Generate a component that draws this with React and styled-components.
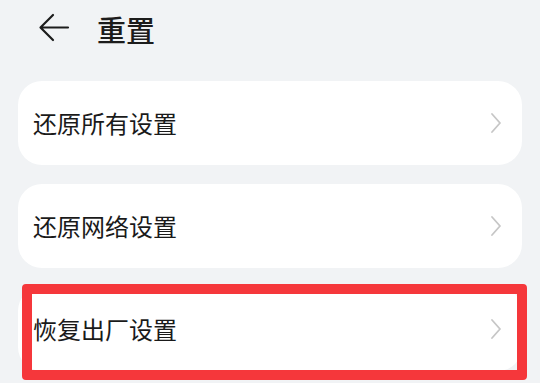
import styled, { createGlobalStyle } from 'styled-components';

const GlobalStyle = createGlobalStyle`
  body {
    margin: 0;
    background: #f1f3f5;
    font-family: "Noto Sans CJK SC", "Noto Sans", sans-serif;
  }
`;

const Page = styled.div`
  width: 540px;
  height: 383px;
  overflow: hidden;
  background: #f1f3f5;
`;

const Header = styled.div`
  height: 56px;
  display: flex;
  align-items: center;
  padding-left: 38px;
`;

const Back = styled.svg`
  width: 32px;
  height: 30px;
  margin-right: 27px;
`;

const Title = styled.div`
  font-size: 29px;
  font-weight: 500;
  color: #1c1c1c;
  line-height: 1;
  margin-top: 2px;
`;

const List = styled.div`
  display: flex;
  flex-direction: column;
  gap: 19px;
  padding: 25px 18px 0;
`;

const Card = styled.div`
  position: relative;
  height: 84px;
  background: #fff;
  border-radius: 24px;
  display: flex;
  align-items: center;
  justify-content: space-between;
  padding: 0 20px 0 15px;
`;

const Label = styled.span`
  font-size: 24px;
  color: #1a1a1a;
  line-height: 1;
`;

const Chevron = styled.svg`
  width: 12px;
  height: 22px;
`;

const Highlight = styled.div`
  position: absolute;
  left: 4px;
  top: -3px;
  width: 505px;
  height: 96px;
  box-sizing: border-box;
  border: 10px solid #f5373b;
  border-radius: 4px;
  pointer-events: none;
`;

const items = [
  { label: '还原所有设置' },
  { label: '还原网络设置' },
  { label: '恢复出厂设置', marked: true },
];

export default function App() {
  return (
    <Page>
      <GlobalStyle />
      <Header>
        <Back viewBox="0 0 32 30" fill="none">
          <path d="M30 14.5H3M15 2L2.5 14.5L15 27" stroke="#1c1c1c" strokeWidth="2.2" strokeLinecap="round" strokeLinejoin="round" />
        </Back>
        <Title>重置</Title>
      </Header>
      <List>
        {items.map((it) => (
          <Card key={it.label}>
            <Label>{it.label}</Label>
            <Chevron viewBox="0 0 12 22" fill="none">
              <path d="M2 2L10 11L2 20" stroke="#c6c6c6" strokeWidth="1.8" strokeLinecap="round" strokeLinejoin="round" />
            </Chevron>
            {it.marked && <Highlight />}
          </Card>
        ))}
      </List>
    </Page>
  );
}
